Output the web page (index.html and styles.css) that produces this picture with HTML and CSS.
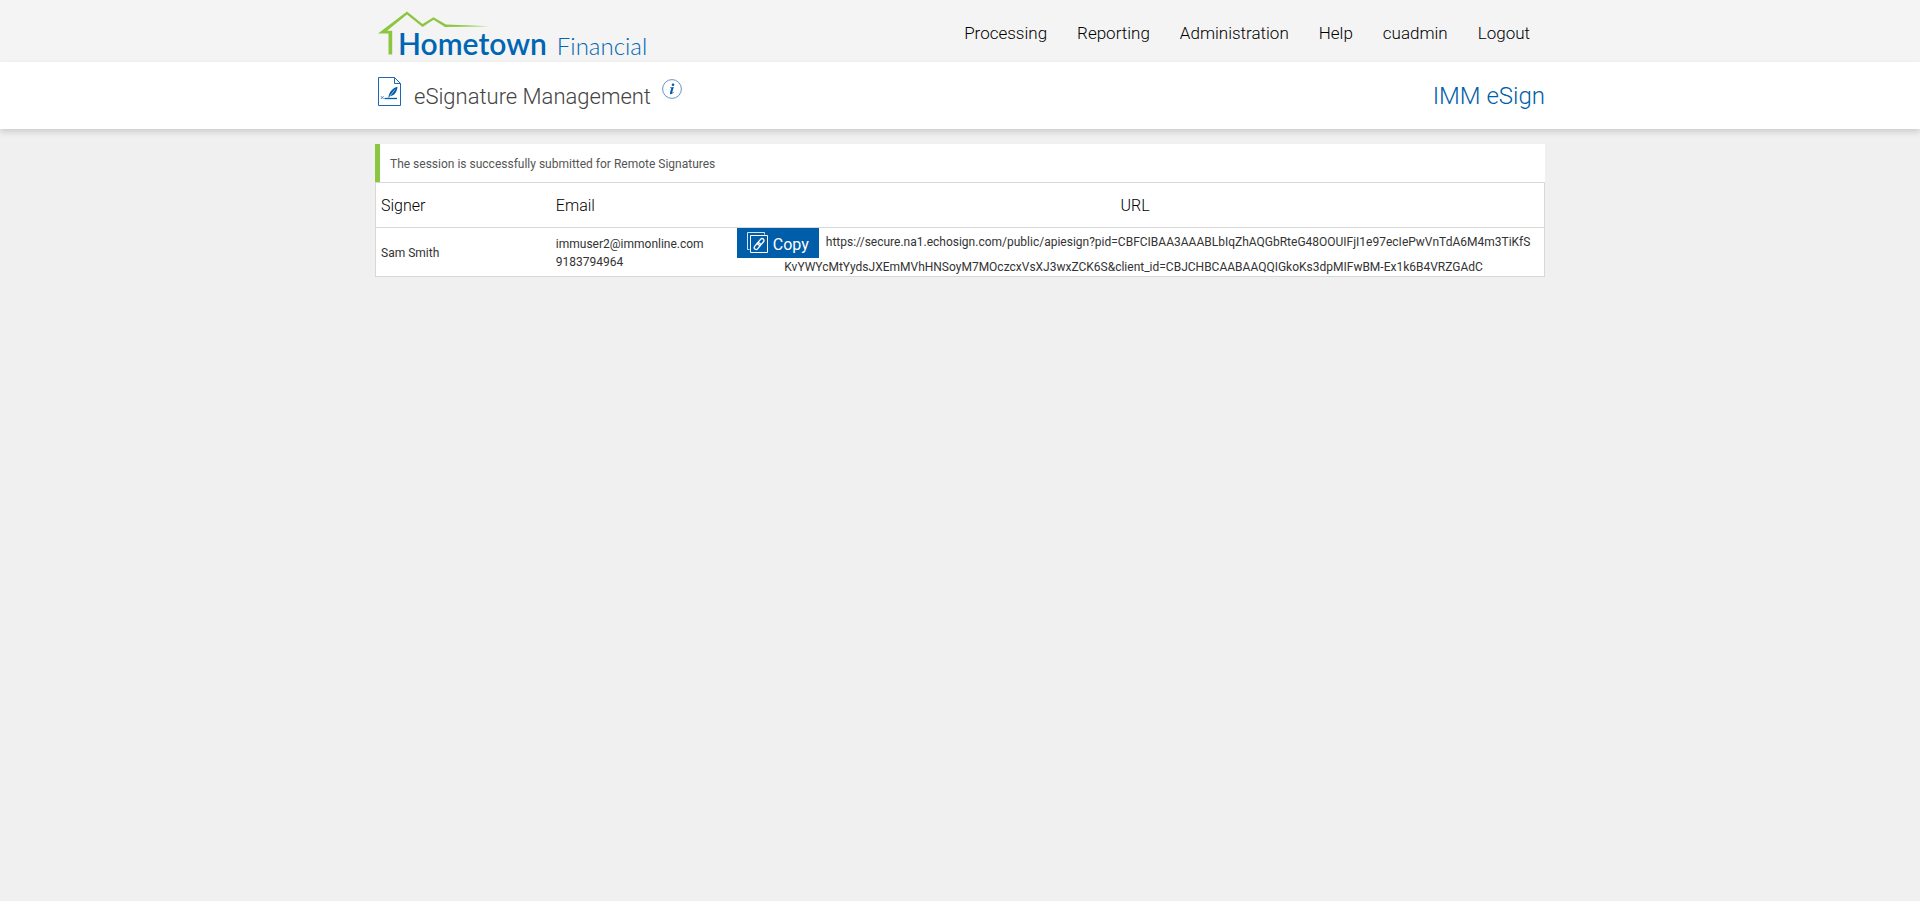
FILE: index.html
```html
<!DOCTYPE html>
<html lang="en">
<head>
<meta charset="utf-8">
<title>eSignature Management</title>
<link rel="stylesheet" href="styles.css">
</head>
<body>
<header class="topbar">
  <div class="container topbar-inner">
    <a class="logo" href="#" aria-label="Hometown Financial">
      <svg class="logo-roof" viewBox="0 0 112 46" aria-hidden="true">
        <path fill="#8cc63f" d="M0 21.500 29 -.5 44.500 12 55.500 5.200 68 12.400 111 14.300 67 15 55.500 7.700 44.500 15 29 2.500 9 18.800H14.200V42.500H10.500V21.500Z"/>
      </svg>
      <span class="logo-text"><span class="logo-main">Hometown</span><span class="logo-sub">Financial</span></span>
    </a>
    <nav class="nav">
      <a href="#">Processing</a>
      <a href="#">Reporting</a>
      <a href="#">Administration</a>
      <a href="#">Help</a>
      <a href="#">cuadmin</a>
      <a href="#">Logout</a>
    </nav>
  </div>
</header>
<div class="titlebar">
  <div class="container titlebar-inner">
    <svg class="page-icon" viewBox="0 0 24 30" aria-hidden="true">
      <path fill="none" stroke="#1d68ae" d="M.5.500H16.500L22.500 6.500V28.500H.5Z"/>
      <path fill="none" stroke="#1d68ae" d="M16.500 .5V6.500H22.500"/>
      <path fill="#005da9" d="M10.500 19.500C11.500 14.500 15 11 19.500 9.800 19 15 16.500 18.500 12.500 19L10.500 21Z"/>
      <path fill="none" stroke="#fff" stroke-width=".6" d="M11.500 19.500 17 12.500"/>
      <path fill="none" stroke="#005da9" stroke-width="1.300" d="M6.500 21.500H19"/>
      <path fill="none" stroke="#1d68ae" stroke-width=".9" d="M3 19.300 5.500 21.800M5.500 19.300 3 21.800"/>
    </svg>
    <h1 class="page-title">eSignature Management</h1>
    <button class="info" type="button" aria-label="Information">
      <svg viewBox="0 0 20 20" aria-hidden="true">
        <circle cx="10" cy="10" r="9.400" fill="none" stroke="#5a83ba" stroke-width=".9"/>
        <circle cx="11" cy="5.800" r="1.300" fill="#005da9"/>
        <path fill="#005da9" d="M8 8.500 11.800 8 10.200 13.600Q10.200 14.200 12 12.700L12.300 13.100Q10 15.600 8.500 15.200 7.700 14.900 8 13.800L9.300 9.300 8 9.100Z"/>
      </svg>
    </button>
    <span class="product">IMM eSign</span>
  </div>
</div>
<main class="container content">
  <p class="message" role="status">The session is successfully submitted for Remote Signatures</p>
  <table class="signers">
    <thead>
      <tr><th class="col-signer" scope="col">Signer</th><th class="col-email" scope="col">Email</th><th class="col-url" scope="col">URL</th></tr>
    </thead>
    <tbody>
      <tr>
        <td>Sam Smith</td>
        <td>immuser2@immonline.com<br>9183794964</td>
        <td class="url-cell"><button class="copy" type="button"><svg viewBox="0 0 22 22" aria-hidden="true">
          <path fill="none" stroke="#d5e3f2" d="M2.500 17.500H.5V.5H17.500V2.500"/>
          <path fill="none" stroke="#fff" d="M3.500 3.500H20.500V20.500H3.500Z"/>
          <g transform="rotate(-50 12 12)" fill="none" stroke="#fff" stroke-width="1.300"><rect x="5.500" y="10.200" width="7.500" height="3.800" rx="1.900"/><rect x="11" y="10.200" width="7.500" height="3.800" rx="1.900"/></g>
        </svg><span class="copy-label">Copy</span></button><span class="url">https://secure.na1.echosign.com/public/apiesign?pid=CBFCIBAA3AAABLbIqZhAQGbRteG48OOUIFjI1e97ecIePwVnTdA6M4m3TiKfS<br>KvYWYcMtYydsJXEmMVhHNSoyM7MOczcxVsXJ3wxZCK6S&amp;client_id=CBJCHBCAABAAQQIGkoKs3dpMIFwBM-Ex1k6B4VRZGAdC</span></td>
      </tr>
    </tbody>
  </table>
</main>
</body>
</html>
```
FILE: styles.css
```css
* { box-sizing: border-box; }

body {
  margin: 0;
  background: #f0f0f0;
  color: #333;
  font: 400 12px/18px Roboto, "Liberation Sans", sans-serif;
}

.container {
  width: 100%;
  max-width: 1170px;
  margin: 0 auto;
}

.topbar { background: #f4f4f4; }

.topbar-inner {
  display: flex;
  justify-content: space-between;
  height: 62px;
}

.logo {
  display: grid;
  padding: 12px 0 0 3px;
  text-decoration: none;
  white-space: nowrap;
}

.logo-roof, .logo-text { grid-area: 1 / 1; }

.logo-roof {
  width: 112px;
  height: 46px;
  overflow: visible;
}

.logo-text {
  padding: 13px 0 0 20px;
  color: #0066b3;
  font-family: Lato, sans-serif;
  line-height: 36px;
}

.logo-main { font-size: 30px; font-weight: 600; }
.logo-sub { margin-left: 10px; font-size: 24px; font-weight: 300; }

.nav {
  display: flex;
  align-items: center;
  gap: 30px;
  padding: 4px 15px 0 0;
}

.nav a {
  color: #000;
  font-size: 17px;
  font-weight: 300;
  line-height: 24px;
  text-decoration: none;
}

.titlebar {
  background: #fff;
  box-shadow: 0 3px 6px rgba(0, 0, 0, .15);
}

.titlebar-inner {
  display: flex;
  align-items: flex-start;
  padding: 15px 0 16px 3px;
}

.page-icon { width: 24px; height: 30px; }

.page-title {
  margin: 4px 11px 0 12px;
  color: #444;
  font-size: 22px;
  font-weight: 300;
  line-height: 32px;
}

.info {
  width: 20px;
  height: 20px;
  margin-top: 2px;
  padding: 0;
  border: 0;
  background: none;
}

.info svg { display: block; }

.product {
  margin: 3px 0 0 auto;
  color: #005da9;
  font-size: 24px;
  font-weight: 300;
  line-height: 32px;
}

.content { padding-top: 15px; }

.message {
  margin: 0;
  padding: 11px 10px 9px;
  border-left: 5px solid #8cc63f;
  background: #fff;
  color: #555;
}

.signers {
  width: 100%;
  border: 1px solid #d8d8d8;
  border-collapse: collapse;
  background: #fff;
  table-layout: fixed;
}

.signers th, .signers td {
  padding: 2px 5px 0;
  text-align: left;
}

.signers th {
  padding: 11px 5px 9px;
  border-bottom: 1px solid #d8d8d8;
  color: #000;
  font-size: 16px;
  font-weight: 300;
  line-height: 24px;
}

.col-signer, .col-email { width: 15%; }

.signers .col-url, .signers .url-cell { text-align: center; }
.signers .url-cell { padding: 0 8px 0 5px; }

.copy {
  display: inline-flex;
  align-items: center;
  gap: 4px;
  height: 30px;
  margin-right: 7px;
  padding: 0 10px;
  border: 0;
  background: #005da9;
  color: #fff;
  font: 400 16px/24px Roboto, sans-serif;
  vertical-align: middle;
}

.copy svg { width: 22px; height: 22px; }
.copy-label { padding-top: 4px; }
```
